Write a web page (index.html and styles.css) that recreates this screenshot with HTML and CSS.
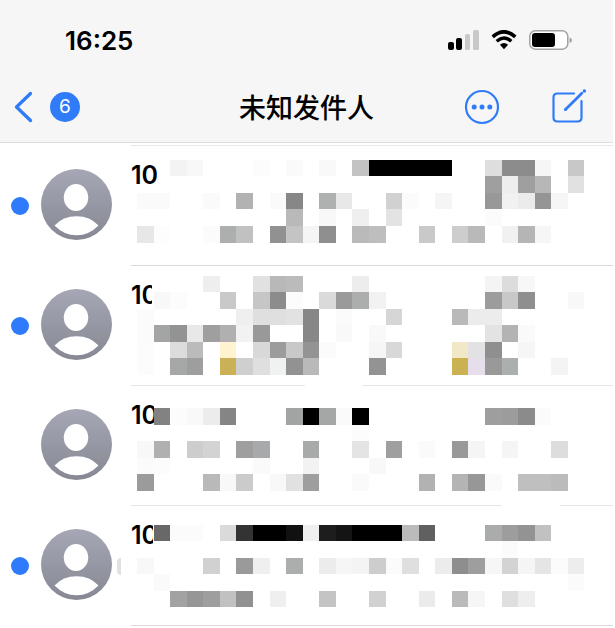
FILE: index.html
```html
<!DOCTYPE html>
<html lang="zh-CN">
<head>
<meta charset="utf-8">
<meta name="viewport" content="width=device-width, initial-scale=1">
<title>未知发件人</title>
<link rel="stylesheet" href="styles.css">
</head>
<body>
<header class="header">
  <div class="status">
    <time class="clock">16:25</time>
    <div class="indicators">
      <svg class="signal" width="31" height="20" viewBox="0 0 31 20" aria-hidden="true">
        <rect x="0" y="12" width="6" height="8" rx="2"/>
        <rect x="8" y="8" width="6" height="12" rx="2"/>
        <rect class="weak" x="17" y="4" width="5" height="16" rx="1.5"/>
        <rect class="weak" x="25" y="0" width="6" height="20" rx="1.5"/>
      </svg>
      <svg class="wifi" width="26" height="20" viewBox="0 0 26 20" aria-hidden="true">
        <path d="M1.7 6.8Q13-3.2 24.3 6.8" fill="none" stroke="#000" stroke-width="3.6"/>
        <path d="M5.7 11.2Q13 4.8 20.3 11.2" fill="none" stroke="#000" stroke-width="3.4"/>
        <path d="M8.9 14.8Q13 11.2 17.1 14.8L13 19.3Z"/>
      </svg>
      <svg class="battery" width="43" height="20" viewBox="0 0 43 20" aria-hidden="true">
        <rect x=".8" y=".8" width="38" height="18.4" rx="5.5" fill="#fff" stroke="#a3a3a5" stroke-width="1.5"/>
        <rect x="3" y="3" width="23" height="14" rx="3"/>
        <path d="M40.5 7.5Q43 8 43 10.3T40.5 13Z" fill="#a3a3a5"/>
      </svg>
    </div>
  </div>
  <nav class="nav">
    <div class="nav-start">
      <button class="icon-button" type="button" aria-label="返回">
        <svg width="19" height="32" viewBox="0 0 19 32"><path d="M16.5 2.5 2.5 16l14 13.5" fill="none" stroke="#307cf8" stroke-width="3.3" stroke-linecap="round" stroke-linejoin="round"/></svg>
      </button>
      <span class="badge">6</span>
    </div>
    <h1 class="title">未知发件人</h1>
    <div class="nav-end">
      <button class="icon-button" type="button" aria-label="更多">
        <svg width="36" height="36" viewBox="0 0 36 36"><circle cx="18" cy="18" r="16" fill="none" stroke="#307cf8" stroke-width="2.2"/><g fill="#307cf8"><circle cx="10.2" cy="18" r="2.5"/><circle cx="18" cy="18" r="2.5"/><circle cx="25.8" cy="18" r="2.5"/></g></svg>
      </button>
      <button class="icon-button" type="button" aria-label="新信息">
        <svg width="36" height="36" viewBox="0 0 36 36"><g fill="none" stroke="#307cf8" stroke-width="2.2" stroke-linecap="round" stroke-linejoin="round"><path d="M23 4.5H6.5Q2.5 4.5 2.5 8.5V28.5Q2.5 32.500 6.500 32.500H26.500Q30.500 32.500 30.500 28.500V12"/><path d="M14.500 20.500 30.800 4.300" stroke-width="2.800"/><path d="M33.300 2h.1" stroke-width="3.400"/></g><path d="m13 22 1-3.500 2.500 2.500z" fill="#307cf8"/></svg>
      </button>
    </div>
  </nav>
</header>

<svg class="symbols" width="0" height="0" aria-hidden="true">
  <defs>
    <linearGradient id="avatar-fill" x1="0" y1="0" x2="0" y2="1"><stop offset="0" stop-color="#a5a7b5"/><stop offset="1" stop-color="#868893"/></linearGradient>
    <symbol id="avatar" viewBox="0 0 71 71">
      <circle cx="35.500" cy="35.500" r="35.500" fill="url(#avatar-fill)"/>
      <ellipse cx="35" cy="28.500" rx="12.200" ry="13.500" fill="#fff"/>
      <path d="M13.500 56.500Q22 47.300 35.500 47.300T57.500 56.500Q48 66.300 35.500 66.300T13.500 56.500Z" fill="#fff"/>
    </symbol>
  </defs>
</svg>

<main>
  <ul class="list">
    <li class="row">
      <span class="dot"></span>
      <svg class="avatar" aria-hidden="true"><use href="#avatar"/></svg>
      <div class="body"><span class="name">10</span><svg class="mosaic" data-message="0"></svg></div>
    </li>
    <li class="row">
      <span class="dot"></span>
      <svg class="avatar" aria-hidden="true"><use href="#avatar"/></svg>
      <div class="body fade-middle"><span class="name">10</span><svg class="mosaic" data-message="1"></svg></div>
    </li>
    <li class="row">
      <span class="dot read"></span>
      <svg class="avatar" aria-hidden="true"><use href="#avatar"/></svg>
      <div class="body fade-end"><span class="name">10</span><svg class="mosaic" data-message="2"></svg></div>
    </li>
    <li class="row">
      <span class="dot"></span>
      <svg class="avatar" aria-hidden="true"><use href="#avatar"/></svg>
      <span class="sliver"></span>
      <div class="body"><span class="name">10</span><svg class="mosaic" data-message="3"></svg></div>
    </li>
  </ul>
</main>
<script src="mosaic.js"></script>
</body>
</html>
```
FILE: styles.css
```css
* { box-sizing: border-box; }

body {
  margin: 0;
  padding-right: 2px;
  background: #fff;
  color: #000;
  font-family: Inter, "Noto Sans CJK SC", sans-serif;
}

.header {
  background: #f6f6f7;
  border-bottom: 1px solid #dcdde0;
}

.status {
  display: flex;
  justify-content: space-between;
  align-items: center;
  height: 72px;
  padding: 8px 41px 0 65px;
}

.clock {
  font-size: 26px;
  font-weight: 600;
}

.indicators {
  display: flex;
  align-items: center;
  gap: 12px;
}

.weak { fill: #c9c9ca; }

.nav {
  display: grid;
  grid-template-columns: 1fr auto 1fr;
  align-items: center;
  height: 70px;
  padding: 0 14px;
}

.nav-start,
.nav-end {
  display: flex;
  align-items: center;
}

.nav-start { gap: 17px; }

.nav-end {
  justify-content: flex-end;
  gap: 51px;
  padding-right: 12px;
}

.icon-button {
  display: flex;
  padding: 0;
  border: 0;
  background: none;
}

.badge {
  width: 30px;
  height: 30px;
  border-radius: 50%;
  background: #307cf8;
  color: #fff;
  font-size: 19px;
  line-height: 30px;
  text-align: center;
}

.title {
  margin: 0;
  padding-top: 4px;
  font-size: 27px;
  line-height: 36px;
  font-weight: 500;
}

.symbols { display: block; }

.list {
  margin: 2px 0 0;
  padding: 0;
  list-style: none;
}

.list::before {
  content: "";
  display: block;
  height: 1px;
  margin-left: 131px;
  background: #e9e9e9;
}

.row {
  position: relative;
  display: grid;
  grid-template-columns: 18px 71px 1fr;
  column-gap: 12px;
  align-items: center;
  height: 120px;
  padding-left: 11px;
}

.dot {
  width: 18px;
  height: 18px;
  border-radius: 50%;
  background: #2f7bfb;
}

.read { visibility: hidden; }

.avatar {
  width: 71px;
  height: 71px;
  margin-bottom: 4px;
}

.body {
  position: relative;
  height: 120px;
  margin-left: 7px;
  padding-top: 14px;
  border-bottom: 1px solid #dadada;
}

.fade-middle,
.fade-end { border-bottom-color: #e6e6e6; }

.fade-middle::after,
.fade-end::after {
  content: "";
  position: absolute;
  bottom: -1px;
  width: 12%;
  height: 1px;
  background: #fff;
}

.fade-middle::after { left: 36%; }
.fade-end::after { left: 77%; }

.name {
  display: block;
  font-size: 25px;
  line-height: 30px;
  font-weight: 600;
}

.mosaic {
  position: absolute;
  top: 0;
  left: 6px;
  width: 448px;
  height: 119px;
}

.sliver {
  position: absolute;
  left: 117px;
  width: 4px;
  height: 17px;
  border-radius: 4px 0 0 4px;
  background: #e1e1e3;
}
```
FILE: mosaic.js
```js
// Each message has a top offset and rows of "column:shade" cells.
// A shade is a two-digit grey level or a six-digit colour.
// "cover" is where the white patch over the end of the name starts.
const CELL = 16.57;
const messages = [
  { top: 13.7, cover: 20, rows: [
    "2:f3 3:f8 7:fc 9:fa 11:f9 13:c3 14:00 15:00 16:00 17:00 18:00 21:de 22:8c 23:8c 24:f6 26:c8",
    "21:9f 22:ee 23:9f 24:b7 26:e1",
    "0:fa 1:fa 4:fa 6:b2 8:fa 9:87 11:aeb1b0 12:e8 15:d1 16:fb 18:f5 21:98 22:f1 23:eb 24:95 25:f6",
    "9:b9 11:f8 13:ef 15:e3 21:fb",
    "0:e7 1:fd 4:fb 5:adafae 6:c1 8:91 9:c4 10:f5 11:8f 13:ba 14:be 17:c9 19:cd 20:b9 22:f1 23:b5 24:f6"
  ] },
  { top: 9.6, cover: 15, rows: [
    "4:ee 7:e1 8:b8 9:bb 13:ed 21:f4 22:dc 23:f7",
    "1:f8 2:fc 5:c9 7:c6 8:8c 9:fc 11:da 12:9a 13:abaead 14:f2 21:9c 22:c8 23:8f 26:f8",
    "0:fb 6:ef 7:df 8:df 9:e2 10:87 12:fb 15:d6 19:b9 20:ec 21:ec",
    "0:fb 1:a2a5a4 2:93 3:e8 4:9f 5:b0 6:f2 7:99 10:87 12:f9 14:f9 21:e3 22:b3 23:fa",
    "0:fc 2:dc 3:bb 5:fff3d0 7:d8 8:9c 9:c8 10:93 11:fb 14:f6 15:d8 19:f0e8c7 20:e2e2e5 21:8f 23:f6",
    "0:fc 2:a5a8a7 3:9e 5:cab157 6:cf 7:df 8:f0f2f1 9:92 10:b9 14:93 19:cab152 20:e6dfeb 21:99 22:abafad 25:f4"
  ] },
  { top: 22.2, cover: 17, rows: [
    "1:82 2:fc 3:f9 4:ec 5:85 9:a1a4a3 10:00 11:a5a7a6 12:fa 13:00 21:9e 22:9c 23:8b 24:fb",
    "13:fc",
    "0:f8 1:b0 3:cd 4:d3 6:9f 7:a7a9aa 10:a7aaa9 13:e4 15:9f 17:fa 19:99 20:f5 22:f5 25:dd",
    "0:fb 1:fc 7:fa 10:f2 14:f8",
    "0:9b 4:b9 5:f8 6:cb 8:f8 9:e1 10:9e 13:fa 17:b2 19:b4 20:97 21:fa 23:bf 24:bf 25:bb"
  ] },
  { top: 18.6, cover: 16, rows: [
    "1:68 2:fb 3:fb 5:da 6:33 7:00 8:00 9:11 10:ef 11:1d 12:14 13:00 14:00 15:00 16:bb 17:60 21:a9acab 22:9d 23:93 24:c1",
    "22:fb",
    "0:f8 4:d1 6:9a 7:ef 9:abaead 11:ec 12:f6 13:f4 14:cd 15:fb 16:df 18:ec 19:8e 20:9e 21:f6 22:d3 23:f5 24:e5 25:fb 26:ed",
    "1:fa 26:fb",
    "2:a2 3:96 4:9e 5:c1 6:91 8:ef 11:c4 14:d1 17:eb 19:ba 20:f6 22:df 23:ee"
  ] }
];

function addRect(svg, x, y, width, height, fill) {
  const rect = document.createElementNS("http://www.w3.org/2000/svg", "rect");
  for (const [key, value] of Object.entries({ x, y, width, height, fill })) {
    rect.setAttribute(key, value);
  }
  svg.append(rect);
}

for (const svg of document.querySelectorAll(".mosaic")) {
  const { top, cover, rows } = messages[svg.dataset.message];
  svg.setAttribute("aria-hidden", "true");
  addRect(svg, cover, 14, 20, 30, "#fff");
  rows.forEach((row, r) => {
    const y = Math.round(top + r * CELL);
    const bottom = Math.round(top + (r + 1) * CELL);
    for (const cell of row.split(" ")) {
      const [column, shade] = cell.split(":");
      const x = Math.round(column * CELL);
      const right = Math.round((+column + 1) * CELL);
      addRect(svg, x, y, right - x, bottom - y, "#" + (shade.length === 2 ? shade.repeat(3) : shade));
    }
  });
}
```
